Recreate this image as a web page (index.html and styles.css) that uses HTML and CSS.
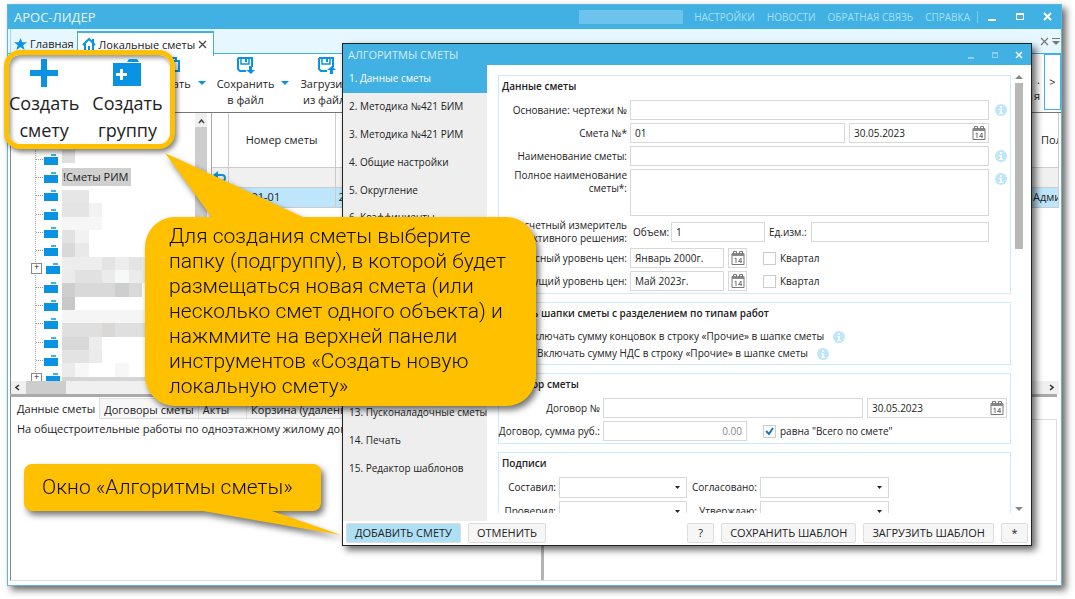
FILE: index.html
```
<!DOCTYPE html>
<html lang="ru">
<head>
    <meta charset="UTF-8">
    <meta name="viewport" content="width=device-width, initial-scale=1.0">
    <title>АРОС-ЛИДЕР</title>
    <link rel="stylesheet" href="styles.css">
</head>
<body>
    <!-- shared icons -->
    <svg class="sprite" aria-hidden="true">
        <symbol id="folder" viewBox="0 0 14 11"><path d="M7 0h5v2H7z" fill="#3cb4ea"/><path d="M0 3h14v8H0z" fill="#0a93e2"/></symbol>
        <symbol id="info" viewBox="0 0 12 12"><circle cx="6" cy="6" r="6" fill="#bde6fd"/><path d="M5 2h2v2H5zM4 5h3v4h1v1H4V9h1V6H4z" fill="#fff"/></symbol>
        <symbol id="calendar" viewBox="0 0 14 14"><path d="M1 2.500h12v11H1z" fill="#fff" stroke="#777"/><path d="M1 2h12v3H1z" fill="#888"/><path d="M2.500 3V.5h3V3M8.500 3V.5h3V3" fill="none" stroke="#777"/><path d="M3.500 8l1.500-1v5M10 12V7L7.500 10.500H11" fill="none" stroke="#777"/></symbol>
        <symbol id="floppy" viewBox="0 0 18 17"><path d="M1 1h14v9M1 1v11l2 2h6" fill="none" stroke="#0a93e2" stroke-width="2"/><path d="M4 1h8v6H4z" fill="none" stroke="#0a93e2" stroke-width="1.500"/><path d="M8 2h2v3H8z" fill="#0a93e2"/></symbol>
    </svg>

    <div class="app">
        <header class="titlebar">
            <span class="app-name">АРОС-ЛИДЕР</span>
            <span class="user"></span>
            <nav class="top-menu">
                <a href="#">НАСТРОЙКИ</a>
                <a href="#">НОВОСТИ</a>
                <a href="#">ОБРАТНАЯ СВЯЗЬ</a>
                <a href="#">СПРАВКА</a>
            </nav>
            <div class="win-buttons">
                <button type="button" aria-label="Свернуть"><svg width="10" height="10"><path d="M1 7h8v2H1z"/></svg></button>
                <button type="button" aria-label="Развернуть"><svg width="10" height="10"><path d="M1 1h8v7H1zM2 3v4h6V3z" fill-rule="evenodd"/></svg></button>
                <button type="button" aria-label="Закрыть"><svg width="10" height="10"><path d="M1 1l7 7M8 1L1 8" stroke="#fff" stroke-width="2"/></svg></button>
            </div>
        </header>

        <div class="tabs">
            <a href="#" class="tab">
                <svg width="13" height="12" viewBox="0 0 13 12"><path d="M6.500 0l1.700 4.300H13L9.200 7.200l1.400 4.800-4.100-2.900L2.400 12l1.400-4.800L0 4.300h4.800z" fill="#0a93e2"/></svg>
                Главная
            </a>
            <a href="#" class="tab tab-active">
                <svg width="14" height="14" viewBox="0 0 14 14"><path d="M1 7l6-6 6 6M3 6v7h8V6" fill="none" stroke="#0a93e2" stroke-width="2"/><path d="M6 8h2v5H6zM10 1h2v4h-2z" fill="#0a93e2"/></svg>
                Локальные сметы
                <svg width="9" height="9"><path d="M1 1l7 7M8 1L1 8" stroke="#444" stroke-width="1.200"/></svg>
            </a>
            <svg class="tabs-end" width="20" height="10"><path d="M1 1l7 7M8 1L1 8" stroke="#777" stroke-width="1.200"/><path d="M12 1h8v1h-8zM12 4h8l-4 4z" fill="#777"/></svg>
        </div>

        <div class="toolbar">
            <button type="button" class="tool tool-print">
                <svg width="17" height="17"><path d="M1 4h15v10H1zM4 1h9v3" fill="none" stroke="#0a93e2" stroke-width="2"/></svg>
                Печать
            </button>
            <i class="drop"></i>
            <button type="button" class="tool">
                <svg width="18" height="17"><use href="#floppy"/><path d="M12 9h3v4h3l-4 4-5-4h3z" fill="#0a93e2"/></svg>
                Сохранить<br>в файл
            </button>
            <i class="drop"></i>
            <button type="button" class="tool tool-load">
                <svg width="18" height="17"><use href="#floppy"/><path d="M12 17h3v-4h3l-4-4-5 4h3z" fill="#0a93e2"/></svg>
                Загрузить<br>из файла
            </button>
            <span class="tool-rest">.<br>я</span>
            <button type="button" class="tool-more">&gt;</button>
        </div>

        <div class="work">
            <div class="tree">
                <div class="tree-view">
                    <ul class="nodes">
                        <li><svg><use href="#folder"/></svg></li>
                        <li><svg><use href="#folder"/></svg></li>
                        <li><svg><use href="#folder"/></svg></li>
                        <li><svg><use href="#folder"/></svg></li>
                        <li><svg><use href="#folder"/></svg></li>
                        <li><svg><use href="#folder"/></svg></li>
                        <li class="closed"><svg><use href="#folder"/></svg></li>
                        <li><svg><use href="#folder"/></svg></li>
                        <li><svg><use href="#folder"/></svg></li>
                        <li><svg><use href="#folder"/></svg></li>
                        <li><svg><use href="#folder"/></svg></li>
                        <li><svg><use href="#folder"/></svg></li>
                        <li class="closed"><svg><use href="#folder"/></svg></li>
                    </ul>
                    <div class="names">
                        <svg class="mask-top" viewBox="0 0 110 18"><path d="M0 0h13v13H0z" fill="#dfdfdf"/></svg>
                        <span class="node-selected">!Сметы РИМ</span>
                        <!-- blurred out names -->
                        <svg class="mask" viewBox="0 0 10 15" preserveAspectRatio="none" shape-rendering="crispEdges">
                            <path d="M0 0h2v1H0z" fill="#e6e6e6"/><path d="M0 1h2v1H0z" fill="#e4e4e4"/><path d="M2 1h1v1H2z" fill="#f2f2f2"/>
                            <path d="M0 2h3v1H0z" fill="#f6f6f6"/><path d="M0 3h1v1H0z" fill="#e2e2e2"/><path d="M1 3h1v1H1z" fill="#f2f2f2"/>
                            <path d="M0 4h1v1H0z" fill="#d9d9d9"/><path d="M1 4h1v1H1z" fill="#e9e9e9"/>
                            <path d="M0 5h8v1H0z" fill="#ededed"/><path d="M3 5h1v1H3zM5 5h1v1H5z" fill="#e4e4e4"/>
                            <path d="M0 6h8v1H0z" fill="#ebebeb"/><path d="M1 6h2v1H1z" fill="#e1e1e1"/><path d="M4 6h1v1H4z" fill="#f6f9f8"/>
                            <path d="M0 7h6v1H0z" fill="#d9d9d9"/><path d="M0 7h1v1H0zM4 7h1v1H4z" fill="#cecece"/>
                            <path d="M0 8h1v1H0z" fill="#c8c8c8"/><path d="M0 9h8v1H0z" fill="#f5f5f5"/>
                            <path d="M0 10h8v1H0z" fill="#dfdfdf"/><path d="M3 10h1v1H3z" fill="#d9d8d6"/>
                            <path d="M0 11h2v1H0z" fill="#d8d8d8"/><path d="M2 11h1v1H2z" fill="#ededed"/>
                            <path d="M0 12h2v1H0z" fill="#e3e3e3"/><path d="M2 12h1v1H2z" fill="#ebebeb"/>
                            <path d="M0 13h1v1H0z" fill="#ebebeb"/><path d="M1 13h1v1H1zM4 13h1v1H4z" fill="#f7f7f7"/>
                            <path d="M0 14h8v1H0z" fill="#d5d5d5"/>
                        </svg>
                    </div>
                    <div class="vscroll"><svg width="7" height="5"><path d="M1 4l2.500-3L6 4" fill="none" stroke="#444" stroke-width="1.500"/></svg></div>
                </div>
                <div class="hscroll"><svg width="5" height="7"><path d="M4 1L1 3.500 4 6" fill="none" stroke="#333" stroke-width="1.500"/></svg><i></i></div>
            </div>

            <div class="grid">
                <table>
                    <thead>
                        <tr><th class="col-mark"></th><th class="col-number">Номер сметы</th><th></th><th class="col-last">Полное</th></tr>
                    </thead>
                    <tbody>
                        <tr class="filter-row"><td><svg width="14" height="12"><path d="M5 0v3h4a4 4 0 0 1 0 8H6V9h3a2 2 0 0 0 0-4H5v3L0 4z" fill="#0a93e2"/></svg></td><td></td><td></td><td></td></tr>
                        <tr class="row-selected"><td></td><td class="number">01-01</td><td>2</td><td>Админ</td></tr>
                    </tbody>
                </table>
                <div class="hscroll hscroll-end"><svg width="5" height="7"><path d="M1 1l3 2.500L1 6" fill="none" stroke="#333" stroke-width="1.500"/></svg></div>
            </div>
        </div>

        <div class="bottom">
            <div class="bottom-tabs">
                <a href="#" class="current">Данные сметы</a>
                <a href="#">Договоры сметы</a>
                <a href="#" class="acts">Акты</a>
                <a href="#">Корзина (удаленные)</a>
            </div>
            <div class="bottom-body">
                <p>На общестроительные работы по одноэтажному жилому дому</p>
                <div class="right-pane"></div>
            </div>
        </div>
    </div>

    <div class="dialog" role="dialog" aria-labelledby="dialog-title">
        <header class="dialog-head">
            <span id="dialog-title">АЛГОРИТМЫ СМЕТЫ</span>
            <div class="win-buttons">
                <button type="button" class="dim" aria-label="Свернуть"><svg width="8" height="8"><path d="M1 6h6v2H1z"/></svg></button>
                <button type="button" class="dim" aria-label="Развернуть"><svg width="8" height="8"><path d="M1 1h6v6H1zM2 3v3h4V3z" fill-rule="evenodd"/></svg></button>
                <button type="button" aria-label="Закрыть"><svg width="8" height="8"><path d="M1 1l6 6M7 1L1 7" stroke="#fff" stroke-width="1.500"/></svg></button>
            </div>
        </header>

        <div class="dialog-body">
            <ul class="sections">
                <li><a href="#" class="current">1. Данные сметы</a></li>
                <li><a href="#">2. Методика №421 БИМ</a></li>
                <li><a href="#">3. Методика №421 РИМ</a></li>
                <li><a href="#">4. Общие настройки</a></li>
                <li><a href="#">5. Округление</a></li>
                <li><a href="#">6. Коэффициенты</a></li>
                <li class="section-13"><a href="#">13. Пусконаладочные сметы</a></li>
                <li class="section-14"><a href="#">14. Печать</a></li>
                <li class="section-15"><a href="#">15. Редактор шаблонов</a></li>
            </ul>

            <form class="pane" id="estimate">
                <section class="group">
                    <h2>Данные сметы</h2>
                    <div class="fields">
                        <label for="basis">Основание: чертежи №</label>
                        <input type="text" id="basis">
                        <svg class="info"><use href="#info"/></svg>

                        <label for="number">Смета №*</label>
                        <div class="line">
                            <input type="text" id="number" class="grow" value="01">
                            <div class="date"><input type="text" value="30.05.2023" aria-label="Дата сметы"><button type="button" aria-label="Календарь"><svg><use href="#calendar"/></svg></button></div>
                        </div>
                        <span></span>

                        <label for="name">Наименование сметы:</label>
                        <input type="text" id="name">
                        <svg class="info"><use href="#info"/></svg>

                        <label for="fullname">Полное наименование<br>сметы*:</label>
                        <textarea id="fullname"></textarea>
                        <svg class="info info-top"><use href="#info"/></svg>

                        <label for="volume">Расчетный измеритель<br>конструктивного решения:</label>
                        <div class="line">
                            <label for="volume" class="inner-label">Объем:</label>
                            <input type="text" id="volume" class="short" value="1">
                            <label for="unit">Ед.изм.:</label>
                            <input type="text" id="unit" class="grow">
                        </div>
                        <span></span>

                        <label for="base">Базисный уровень цен:</label>
                        <div class="line">
                            <input type="text" id="base" class="short" value="Январь 2000г.">
                            <button type="button" class="cal-button" aria-label="Календарь"><svg><use href="#calendar"/></svg></button>
                            <label class="check"><input type="checkbox"> Квартал</label>
                        </div>
                        <span></span>

                        <label for="current">Текущий уровень цен:</label>
                        <div class="line">
                            <input type="text" id="current" class="short" value="Май 2023г.">
                            <button type="button" class="cal-button" aria-label="Календарь"><svg><use href="#calendar"/></svg></button>
                            <label class="check"><input type="checkbox"> Квартал</label>
                        </div>
                        <span></span>
                    </div>
                </section>

                <section class="group group-print">
                    <h2>Печать шапки сметы с разделением по типам работ</h2>
                    <label class="check"><input type="checkbox"> Включать сумму концовок в строку «Прочие» в шапке сметы <svg class="info"><use href="#info"/></svg></label>
                    <label class="check nested"><input type="checkbox"> Включать сумму НДС в строку «Прочие» в шапке сметы <svg class="info"><use href="#info"/></svg></label>
                </section>

                <section class="group">
                    <h2>Договор сметы</h2>
                    <div class="fields contract">
                        <label for="contract">Договор №</label>
                        <div class="line">
                            <input type="text" id="contract" class="grow">
                            <div class="date"><input type="text" value="30.05.2023" aria-label="Дата договора"><button type="button" aria-label="Календарь"><svg><use href="#calendar"/></svg></button></div>
                        </div>
                        <label for="sum">Договор, сумма руб.:</label>
                        <div class="line">
                            <input type="text" id="sum" class="sum" value="0.00" disabled>
                            <label class="check"><input type="checkbox" checked> равна "Всего по смете"</label>
                        </div>
                    </div>
                </section>

                <section class="group">
                    <h2>Подписи</h2>
                    <div class="signs">
                        <label for="made">Составил:</label>
                        <select id="made"><option></option></select>
                        <label for="agreed">Согласовано:</label>
                        <select id="agreed"><option></option></select>
                        <label for="checked">Проверил:</label>
                        <select id="checked"><option></option></select>
                        <label for="approved">Утверждаю:</label>
                        <select id="approved"><option></option></select>
                    </div>
                </section>
            </form>

            <div class="pane-scroll">
                <i class="arrow-up"></i>
                <i class="thumb"></i>
                <i class="arrow-down"></i>
            </div>
        </div>

        <footer class="dialog-foot">
            <button type="button" class="primary">ДОБАВИТЬ СМЕТУ</button>
            <button type="button">ОТМЕНИТЬ</button>
            <button type="button" class="push">?</button>
            <button type="button">СОХРАНИТЬ ШАБЛОН</button>
            <button type="button">ЗАГРУЗИТЬ ШАБЛОН</button>
            <button type="button">*</button>
        </footer>
    </div>

    <!-- notes over the windows -->
    <div class="magnifier">
        <button type="button">
            <svg width="28" height="28"><path d="M11 0h6v11h11v6H17v11h-6V17H0v-6h11z" fill="#0a93e2"/></svg>
            Создать<br>смету
        </button>
        <button type="button">
            <svg width="28" height="28"><path d="M14 3l2-3h8l2 3z" fill="#0a93e2"/><path d="M0 4h28v23H0z" fill="#0a93e2"/><path d="M7 10h3v4h4v3h-4v4H7v-4H3v-3h4z" fill="#fff"/></svg>
            Создать<br>группу
        </button>
    </div>

    <div class="note note-create">
        <svg class="tail" width="144" height="66"><path d="M0 0l48 66h94z" fill="#ffc000"/></svg>
        <p>Для создания сметы выберите<br>папку (подгруппу), в которой будет<br>размещаться новая смета (или<br>несколько смет одного объекта) и<br>нажммите на верхней панели<br>инструментов «Создать новую<br>локальную смету»</p>
    </div>

    <div class="note note-window">
        <svg class="tail" width="144" height="26"><path d="M0 0h72l72 25z" fill="#ffc000"/></svg>
        <p>Окно «Алгоритмы сметы»</p>
    </div>
</body>
</html>
```
FILE: styles.css
```
* {
    box-sizing: border-box;
}

body {
    position: relative;
    display: flex;
    height: 100vh;
    margin: 0;
    padding: 4px 13px 13px 7px;
    overflow: hidden;
    background: #fff;
    color: #222;
    font-family: "Open Sans", "Noto Sans", sans-serif;
    font-size: 11px;
    line-height: 16px;
}

a {
    color: inherit;
    text-decoration: none;
}

button,
input,
select,
textarea {
    margin: 0;
    font: inherit;
    color: inherit;
}

button {
    padding: 0;
    border: none;
    background: none;
}

ul,
p,
h2 {
    margin: 0;
    padding: 0;
    list-style: none;
}

.sprite {
    position: absolute;
    width: 0;
    height: 0;
}

/* main window */
.app {
    flex: 1;
    min-width: 0;
    display: flex;
    flex-direction: column;
    border: 1px solid #5cb6e0;
    background: #fff;
    box-shadow: 4px 4px 7px rgba(0, 0, 0, 0.6);
}

.titlebar {
    display: flex;
    align-items: center;
    height: 24px;
    padding: 0 8px 0 6px;
    background: #41b0e2;
    color: #e6f6fd;
}

.app-name {
    font-size: 13px;
}

.user {
    width: 104px;
    height: 14px;
    margin-left: auto;
    background: #6cc3eb;
}

.top-menu {
    display: flex;
    gap: 12px;
    padding: 0 7px 0 11px;
    border-right: 1px solid #7ccbed;
    color: #a9e0f8;
    font-size: 10px;
    line-height: 12px;
}

.win-buttons {
    display: flex;
    gap: 18px;
    margin-left: 9px;
}

.win-buttons svg {
    display: block;
    fill: #fff;
}

.tabs {
    display: flex;
    height: 25px;
    padding-left: 2px;
    border-bottom: 1px solid #41b0e2;
    background: #e6f7ff;
}

.tab {
    display: flex;
    align-items: center;
    gap: 3px;
    padding: 6px 3px 0;
    border-left: 1px solid #9ed8f3;
}

.tab-active {
    height: 25px;
    margin-top: 2px;
    padding: 0 6px 0 4px;
    border: 1px solid #41b0e2;
    border-top-width: 2px;
    border-bottom: none;
    background: #fff;
}

.tabs-end {
    margin: 8px 1px 0 auto;
}

.toolbar {
    display: flex;
    height: 59px;
    padding-left: 144px;
    border-bottom: 1px solid #777;
}

.tool {
    display: flex;
    flex-direction: column;
    align-items: center;
    padding-top: 3px;
}

.tool svg {
    margin-bottom: 2px;
}

.drop {
    width: 0;
    height: 0;
    margin: 27px 11px 0 7px;
    border: 4px solid transparent;
    border-top-color: #0a93e2;
    border-bottom: none;
}

.tool-rest {
    margin-left: auto;
    padding: 18px 4px 0 0;
    text-align: right;
}

.tool-more {
    width: 17px;
    height: 56px;
    border: 1px solid #41b0e2;
}

.work {
    display: flex;
    gap: 4px;
    height: 281px;
    margin-left: 2px;
    border-left: 1px solid #888;
}

.tree {
    display: flex;
    flex-direction: column;
    width: 196px;
}

.tree-view {
    flex: 1;
    min-height: 0;
    display: flex;
    overflow: hidden;
}

.nodes {
    display: grid;
    grid-auto-rows: 1fr;
    width: 27px;
    height: 238px;
    margin: 37px 0 0 24px;
    border-left: 1px dotted #aaa;
}

.nodes li {
    display: flex;
    align-items: center;
    gap: 1px;
}

.nodes li::before {
    content: "";
    width: 7px;
    border-top: 1px dotted #999;
}

.nodes .closed::before {
    content: "+";
    width: 9px;
    height: 9px;
    margin-left: -5px;
    margin-right: 3px;
    border: 1px solid #888;
    background: #fff;
    font-size: 9px;
    line-height: 6px;
    text-align: center;
}

.nodes svg {
    width: 14px;
    height: 11px;
}

.names {
    flex: 1;
    display: flex;
    flex-direction: column;
    align-items: flex-start;
    padding-top: 37px;
}

.mask-top {
    flex: none;
    width: 110px;
    height: 18px;
}

.node-selected {
    flex: none;
    padding: 1px 3px 1px 1px;
    background: #d0d0d0;
}

.mask {
    flex: none;
    width: 133px;
    height: 200px;
    margin-top: 4px;
}

.vscroll {
    flex: none;
    width: 12px;
    padding-top: 14px;
    background: #cdcdcd linear-gradient(#f0f0f0, #f0f0f0) no-repeat 0 0 / 12px 14px;
}

.vscroll svg {
    display: block;
    margin: -8px auto 0;
}

.hscroll {
    display: flex;
    align-items: center;
    gap: 6px;
    height: 13px;
    padding-left: 4px;
    background: #f0f0f0;
}

.hscroll i {
    width: 40px;
    height: 13px;
    background: #cdcdcd;
}

.hscroll-end {
    justify-content: flex-end;
    margin-top: auto;
    padding-right: 5px;
}

.grid {
    flex: 1;
    min-width: 0;
    display: flex;
    flex-direction: column;
    margin-right: 2px;
    border-left: 1px solid #aaa;
}

.grid table {
    width: 100%;
    table-layout: fixed;
    border-collapse: collapse;
}

.grid th {
    height: 54px;
    padding: 0;
    border: 1px solid #ccc;
    border-top: none;
    border-left: none;
    overflow: hidden;
    font-weight: normal;
}

.grid td {
    height: 20px;
    padding: 0 3px;
    border: 1px solid #ccc;
    border-left: none;
    overflow: hidden;
    line-height: 12px;
    white-space: nowrap;
}

.grid td:first-child {
    padding: 0 1px;
}

.col-mark {
    width: 16px;
}

.col-number {
    width: 107px;
}

.grid .col-last {
    width: 29px;
    padding-left: 11px;
}

.grid .number {
    padding-left: 23px;
}

.filter-row {
    background: #f0f0f0;
}

.filter-row svg {
    display: block;
}

.row-selected {
    background: #bde6fd;
}

.bottom {
    flex: 1;
    min-height: 0;
    display: flex;
    flex-direction: column;
    margin: 0 4px 4px 2px;
    border-top: 3px solid #aaa;
    border-left: 1px solid #888;
    border-bottom: 1px solid #ddd;
}

.bottom-tabs {
    display: flex;
    height: 22px;
}

.bottom-tabs a {
    margin-top: 1px;
    padding: 3px 4px;
    border: 1px solid #ddd;
    border-left: none;
    background: #f7f7f7;
}

.bottom-tabs .current {
    margin-top: 0;
    padding-left: 6px;
    border-color: transparent #ddd transparent transparent;
    background: #fff;
}

.bottom-tabs .acts {
    padding-right: 17px;
}

.bottom-body {
    flex: 1;
    display: flex;
    border-right: 1px solid #ddd;
}

.bottom-body p {
    width: 51%;
    padding: 2px 6px;
    border-right: 3px solid #b4b4b4;
    white-space: nowrap;
}

.right-pane {
    flex: 1;
    border-top: 1px solid #ddd;
}

/* dialog */
.dialog {
    position: absolute;
    inset: 43px 43px 53px 342px;
    display: flex;
    flex-direction: column;
    border: 1px solid #222;
    background: #fff;
    font-size: 10px;
    line-height: 13px;
    box-shadow: 4px 4px 7px rgba(0, 0, 0, 0.6);
}

.dialog-head {
    display: flex;
    align-items: center;
    justify-content: space-between;
    height: 21px;
    padding: 0 8px 0 5px;
    background: #41b0e2;
    color: #d5effb;
    font-size: 11px;
}

.dialog .win-buttons {
    gap: 16px;
}

.dim {
    opacity: 0.4;
}

.dialog-body {
    flex: 1;
    min-height: 0;
    display: flex;
}

.sections {
    display: grid;
    grid-template-rows: repeat(15, 1fr);
    width: 144px;
    padding-bottom: 39px;
    background: #eee;
}

.section-13 {
    grid-row: 13;
}

.section-14 {
    grid-row: 14;
}

.section-15 {
    grid-row: 15;
}

.sections a {
    display: flex;
    align-items: center;
    height: 100%;
    padding-left: 6px;
    white-space: nowrap;
}

.sections .current {
    background: #41b0e2;
    color: #fff;
    font-weight: 500;
}

.pane {
    flex: 1;
    min-width: 0;
    display: flex;
    flex-direction: column;
    gap: 8px;
    margin-bottom: 8px;
    padding: 10px 4px 0 11px;
    overflow: hidden;
}

.group {
    flex: none;
    padding: 4px 3px 2px;
    border: 1px solid #cdebfa;
}

.group h2 {
    margin-bottom: 7px;
    font-size: 10px;
    line-height: 13px;
    font-weight: 600;
}

.fields {
    display: grid;
    grid-template-columns: 125px 1fr 15px;
    gap: 3px;
    align-items: center;
}

.fields > label,
.signs label {
    display: flex;
    justify-content: flex-end;
    text-align: right;
    white-space: nowrap;
}

.fields.contract {
    grid-template-columns: 98px 1fr;
}

.pane input[type="text"],
.pane textarea,
.pane select,
.date,
.cal-button {
    width: 100%;
    min-width: 0;
    height: 20px;
    padding: 0 4px;
    border: 1px solid #d8d8d8;
    border-radius: 0;
    background: #fff;
}

.pane textarea {
    display: block;
    height: 47px;
    resize: none;
}

.fields label[for="fullname"] {
    align-self: start;
}

.line {
    display: flex;
    align-items: center;
    gap: 4px;
}

.line .grow {
    flex: 1;
}

.pane .line input.short {
    flex: none;
    width: 94px;
}

.pane .line input.sum {
    flex: none;
    width: 144px;
    color: #888;
    text-align: right;
}

.inner-label {
    width: 37px;
    padding-left: 3px;
}

.pane .date {
    flex: none;
    display: flex;
    align-items: center;
    width: 140px;
    padding-right: 2px;
}

.pane .date input {
    flex: 1;
    height: 18px;
    padding: 0;
    border: none;
}

.date svg,
.cal-button svg {
    display: block;
    width: 14px;
    height: 14px;
}

.pane .cal-button {
    flex: none;
    width: 19px;
    padding: 0 2px;
}

.info {
    width: 12px;
    height: 12px;
    justify-self: end;
}

.info-top {
    align-self: start;
    margin-top: 4px;
}

.check {
    display: flex;
    align-items: center;
    gap: 4px;
    margin-left: 12px;
}

.check input {
    appearance: none;
    width: 13px;
    height: 13px;
    border: 1px solid #ccc;
    background: #fff;
}

.check input:checked {
    background: url("data:image/svg+xml,%3Csvg xmlns='http://www.w3.org/2000/svg' viewBox='0 0 11 11'%3E%3Cpath d='M2 5l3 3 4-6' fill='none' stroke='%231478b8' stroke-width='2'/%3E%3C/svg%3E");
}

.group-print .check {
    margin: 0 0 0 8px;
    line-height: 17px;
}

.group-print h2 {
    margin-bottom: 8px;
}

.group-print .nested {
    margin-left: 18px;
}

.group-print .info {
    margin-left: 5px;
}

.signs {
    display: grid;
    grid-template-columns: 54px 128px 67px 129px;
    gap: 3px;
    align-items: center;
}

.pane select {
    height: 21px;
    appearance: none;
    background: #fff url("data:image/svg+xml,%3Csvg xmlns='http://www.w3.org/2000/svg' width='5' height='3'%3E%3Cpath d='M0 0h5L2.500 3z' fill='%23222'/%3E%3C/svg%3E") no-repeat right 6px center;
}

.pane-scroll {
    display: flex;
    flex-direction: column;
    align-items: center;
    width: 16px;
    padding: 10px 8px 10px 0;
}

.arrow-up,
.arrow-down {
    border: 4px solid transparent;
}

.arrow-up {
    border-top: none;
    border-bottom: 4px solid #888;
}

.arrow-down {
    margin-top: auto;
    border-top: 4px solid #888;
    border-bottom: none;
}

.thumb {
    width: 8px;
    height: 38%;
    margin-top: 4px;
    background: #b8b8b8;
}

.dialog-foot {
    display: flex;
    gap: 7px;
    padding: 2px 3px;
}

.dialog-foot button {
    min-width: 27px;
    height: 20px;
    padding: 0 8px;
    border: 1px solid #ddd;
    border-radius: 2px;
    background: #f6f6f6;
    font-size: 11px;
    line-height: 16px;
    white-space: nowrap;
}

.dialog-foot .primary {
    background: #afdff5;
}

.dialog-foot .push {
    margin-left: auto;
}

/* notes */
.magnifier {
    position: absolute;
    top: 50px;
    left: 4px;
    display: flex;
    gap: 13px;
    width: 171px;
    height: 99px;
    padding-top: 4px;
    border: 5px solid #ffc000;
    border-radius: 16px;
    background: #fff;
    box-shadow: 2px 3px 5px rgba(0, 0, 0, 0.5), inset 2px 3px 4px rgba(0, 0, 0, 0.4);
    font-size: 18px;
    line-height: 27px;
}

.magnifier button {
    display: flex;
    flex-direction: column;
    align-items: center;
}

.magnifier svg {
    flex: none;
    margin-bottom: 3px;
}

.note {
    position: absolute;
    background: #ffc000;
    color: #111;
    font-family: Roboto, sans-serif;
    font-size: 21px;
    font-weight: 300;
    line-height: 25px;
    white-space: nowrap;
    filter: drop-shadow(3px 4px 3px rgba(0, 0, 0, 0.55));
}

.note-create {
    top: 217px;
    left: 145px;
    padding: 7px 30px 7px 24px;
    border-radius: 30px;
}

.note-window {
    top: 464px;
    left: 24px;
    padding: 11px 28px 11px 18px;
    border-radius: 8px;
}

.tail {
    position: absolute;
}

.note-create .tail {
    bottom: 100%;
    left: 20px;
    margin-bottom: -2px;
}

.note-window .tail {
    top: 100%;
    left: 173px;
    margin-top: -1px;
}
```
